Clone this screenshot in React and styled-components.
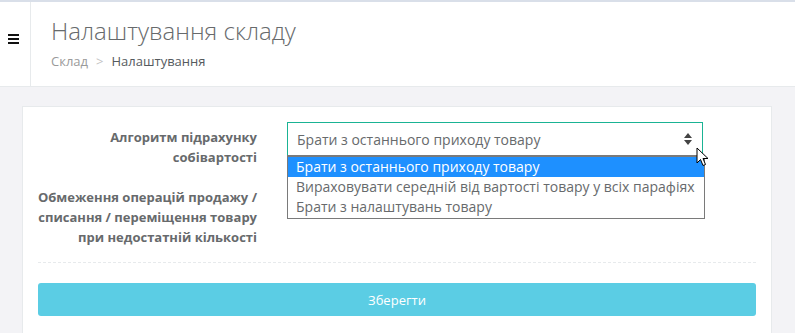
import React from "react";
import styled, { createGlobalStyle } from "styled-components";

const GlobalStyle = createGlobalStyle`
  body {
    margin: 0;
    background: #f3f3f6;
    font-family: "Open Sans", "Liberation Sans", sans-serif;
    color: #676a6c;
  }
`;

const Page = styled.div`
  width: 795px;
  height: 333px;
  overflow: hidden;
  border-top: 2px solid #d9dfe9;
  box-sizing: border-box;
`;

const Header = styled.div`
  display: flex;
  height: 84px;
  background: #fff;
  border-bottom: 1px solid #e7eaec;
`;

const SideToggle = styled.div`
  width: 31px;
  border-right: 1px solid #e7eaec;
  display: flex;
  align-items: center;
  justify-content: center;
  padding-bottom: 10px;
  box-sizing: border-box;
`;

const Burger = styled.span`
  display: flex;
  flex-direction: column;
  gap: 2px;
  margin-left: -3px;
  span {
    display: block;
    width: 11px;
    height: 2px;
    background: #111;
  }
`;

const Heading = styled.div`
  padding: 14px 0 0 20px;
`;

const Title = styled.h2`
  margin: 0;
  font-size: 24px;
  font-weight: 300;
  line-height: 30px;
  color: #676a6c;
`;

const Crumbs = styled.div`
  margin-top: 6px;
  font-size: 13px;
  line-height: 18px;
  display: flex;
  gap: 8px;
`;

const Crumb = styled.span`
  color: ${(p) => (p.$active ? "#555a5e" : "#9a9a9a")};
`;

const Sep = styled.span`
  color: #c4c4c4;
`;

const Content = styled.div`
  padding: 19px 23px 0 22px;
`;

const Card = styled.div`
  background: #fff;
  border: 1px solid #e7eaec;
  padding: 15px 15px 20px;
`;

const Row = styled.div`
  display: grid;
  grid-template-columns: 231px 416px;
  column-gap: 30px;
  margin: 0 0 15px -12px;
`;

const Label = styled.label`
  padding-top: 5px;
  text-align: right;
  font-size: 13px;
  font-weight: 700;
  line-height: 20px;
  color: #676a6c;
`;

const Field = styled.div`
  position: relative;
`;

const Select = styled.div`
  height: 34px;
  box-sizing: border-box;
  border: 1px solid ${(p) => (p.$focus ? "#1ab394" : "#e5e6e7")};
  padding: 0 9px;
  display: flex;
  align-items: center;
  justify-content: space-between;
  font-size: 14px;
  color: #676a6c;
`;

const Arrows = styled.svg`
  width: 8px;
  height: 12px;
  margin-right: 1px;
`;

const Dropdown = styled.ul`
  position: absolute;
  top: 33px;
  left: 0;
  width: 418px;
  margin: 0;
  padding: 0 0 1px;
  list-style: none;
  background: #fff;
  border: 1px solid #7a7a7a;
  border-top-width: 2px;
  box-sizing: border-box;
  z-index: 2;
`;

const Option = styled.li`
  height: 20px;
  line-height: 20px;
  padding: 0 8px;
  font-size: 14px;
  white-space: nowrap;
  color: ${(p) => (p.$selected ? "#fff" : "#676a6c")};
  background: ${(p) => (p.$selected ? "#1e90ff" : "transparent")};
`;

const Cursor = styled.svg`
  position: absolute;
  left: 409px;
  top: 25px;
  width: 13px;
  height: 20px;
  z-index: 3;
`;

const Divider = styled.div`
  border-top: 1px dashed #e7eaec;
  margin: 2px 0 20px;
`;

const SaveButton = styled.button`
  display: block;
  width: 100%;
  height: 33px;
  border: none;
  border-radius: 3px;
  background: #5bcde4;
  color: #fff;
  font-family: "Open Sans", "Liberation Sans", sans-serif;
  font-size: 13px;
`;

const options = [
  "Брати з останнього приходу товару",
  "Вираховувати середній від вартості товару у всіх парафіях",
  "Брати з налаштувань товару",
];

const App = () => {
  return (
    <Page>
      <GlobalStyle />
      <Header>
        <SideToggle>
          <Burger>
            <span />
            <span />
            <span />
          </Burger>
        </SideToggle>
        <Heading>
          <Title>Налаштування складу</Title>
          <Crumbs>
            <Crumb>Склад</Crumb>
            <Sep>&gt;</Sep>
            <Crumb $active>Налаштування</Crumb>
          </Crumbs>
        </Heading>
      </Header>
      <Content>
        <Card>
          <Row>
            <Label>Алгоритм підрахунку собівартості</Label>
            <Field>
              <Select $focus>
                <span>{options[0]}</span>
                <Arrows viewBox="0 0 8 12">
                  <path d="M4 0 L8 5 L0 5 Z M4 12 L8 7 L0 7 Z" fill="#444" />
                </Arrows>
              </Select>
              <Dropdown>
                {options.map((o, i) => (
                  <Option key={o} $selected={i === 0}>
                    {o}
                  </Option>
                ))}
              </Dropdown>
              <Cursor viewBox="0 0 13 20">
                <path
                  d="M1 1 L1 16 L4.5 12.5 L7 18.5 L9.5 17.5 L7 11.5 L12 11.5 Z"
                  fill="#fff"
                  stroke="#000"
                  strokeWidth="1"
                  strokeLinejoin="round"
                />
              </Cursor>
            </Field>
          </Row>
          <Row>
            <Label>
              Обмеження операцій продажу / списання / переміщення товару при
              недостатній кількості
            </Label>
            <Field>
              <Select />
            </Field>
          </Row>
          <Divider />
          <SaveButton type="button">Зберегти</SaveButton>
        </Card>
      </Content>
    </Page>
  );
};

export default App;
